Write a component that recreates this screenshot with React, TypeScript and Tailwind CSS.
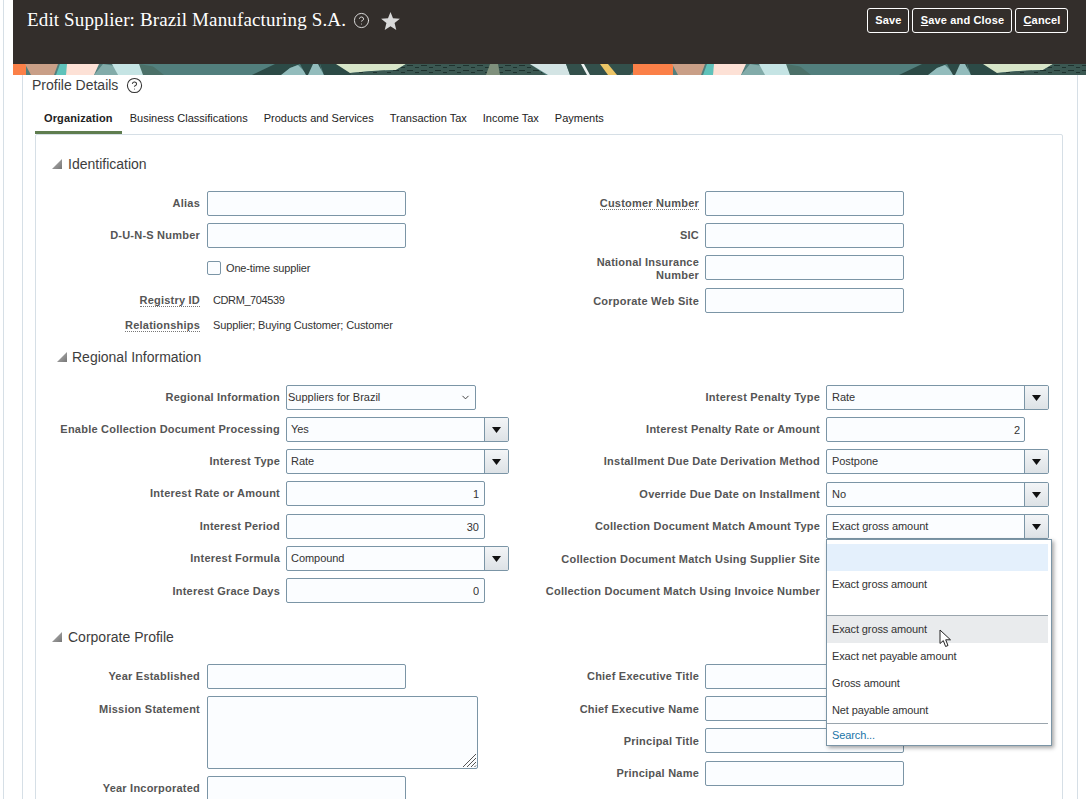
import React from "react";
import { ChevronDown, CircleHelp } from "lucide-react";

const FONT = "[font-family:'Liberation_Sans',Arial,sans-serif]";

function Tri() {
  return (
    <svg width="10" height="10" viewBox="0 0 10 10" className="shrink-0">
      <defs>
        <linearGradient id="tg" x1="0" y1="0" x2="1" y2="1">
          <stop offset="0" stopColor="#b5b5b5" />
          <stop offset="1" stopColor="#777777" />
        </linearGradient>
      </defs>
      <polygon points="10,0 10,10 0,10" fill="url(#tg)" />
    </svg>
  );
}

function Heading({ text, className }: { text: string; className: string }) {
  return (
    <div className={`flex h-[20px] items-center text-[14px] text-[#3d3d3d] ${className}`}>
      <Tri />
      <span>{text}</span>
    </div>
  );
}

function Label({ text, w, dotted, low }: { text: React.ReactNode; w: string; dotted?: boolean; low?: boolean }) {
  return (
    <div className={`${w} ${low ? "pt-[2px]" : ""} shrink-0 text-right text-[11px] font-bold leading-[13px] tracking-[0.22px] text-[#555555]`}>
      <span className={dotted ? "border-b border-dotted border-[#777777]" : ""}>{text}</span>
    </div>
  );
}

const boxCls =
  "h-[25px] rounded-[2px] border border-[#7b95a6] bg-[#fbfdff] text-[11px] text-[#333333] outline-none";

function Row({
  label,
  w,
  dotted,
  low,
  gap = "gap-[6px]",
  className = "",
  children,
}: {
  label: React.ReactNode;
  w: string;
  dotted?: boolean;
  low?: boolean;
  gap?: string;
  className?: string;
  children?: React.ReactNode;
}) {
  return (
    <div className={`flex h-[25px] items-center ${gap} ${className}`}>
      <Label text={label} w={w} dotted={dotted} low={low} />
      {children}
    </div>
  );
}

function TextBox({ value = "", pad = "pr-[4px]" }: { value?: string; pad?: string }) {
  return (
    <input
      readOnly
      value={value}
      className={`${boxCls} w-[199px] pl-[4px] pt-[1px] ${pad} text-right`}
    />
  );
}

function Combo({ value, pad = "pl-[4px]" }: { value: string; pad?: string }) {
  return (
    <div className={`${boxCls} flex w-[223px] items-stretch overflow-hidden`}>
      <div className={`flex flex-1 items-center ${pad} tracking-[-0.05px]`}>{value}</div>
      <div className="flex w-[24px] items-center justify-center border-l border-[#7b95a6] bg-gradient-to-b from-[#f3f5f7] to-[#dde2e6]">
        <svg width="9" height="6" viewBox="0 0 9 6">
          <polygon points="0,0 9,0 4.5,6" fill="#111111" />
        </svg>
      </div>
    </div>
  );
}

const tileShapes = (
  <>
    <polygon points="-14,0 26,0 26,11 -14,11" fill="#fb8048" />
    <polygon points="25,0 58,0 54,11 31,11" fill="#c99f87" />
    <polygon points="60,0 68,0 66,11 56,11" fill="#5fc2ba" />
    <polygon points="67,0 99,0 94,11 66,11" fill="#fde1d6" />
    <polygon points="103,0 116,2 118,11 94,11" fill="#82aba9" />
    <polygon points="112,0 140,0 144,11 118,11" fill="#c5e4e4" />
    <polygon points="139,0 156,3 166,11 143,11" fill="#4b7068" />
    <polygon points="150,0 275,0 252,11 164,11" fill="#527f7d" />
    <polygon points="275,0 300,0 290,4 282,11 252,11" fill="#2c4a46" />
    <polygon points="290,4 298,1 308,11 281,11" fill="#93bcbc" />
    <polygon points="300,0 320,0 322,11 306,11" fill="#2c4a46" />
    <polygon points="308,11 313,0 318,0 324,11" fill="#93bcbc" />
    <polygon points="320,0 345,0 352,11 324,11" fill="#2c4a46" />
    <polygon points="336,0 406,0 396,6 372,7 350,9" fill="#d7e5c8" />
    <polygon points="350,9 372,7 396,6 406,0 530,0 546,11 352,11" fill="url(#dots)" />
    <polygon points="490,0 498,0 500,11 486,11" fill="#7f907c" />
    <polygon points="530,0 566,0 570,11 548,11" fill="#d3e4e4" />
    <polygon points="566,0 640,0 630,11 570,11" fill="#33504b" />
    <polygon points="581,0 584,0 590,11 587,11" fill="#eef3f2" />
    <polygon points="600,0 608,0 617,11 608,11" fill="#edc566" />
  </>
);

function Banner() {
  return (
    <svg width="1073" height="11" viewBox="13 0 1073 11" className="block">
      <defs>
        <pattern id="dots" width="14" height="5" patternUnits="userSpaceOnUse">
          <rect width="14" height="5" fill="#3b5852" />
          <rect x="1" y="1" width="6" height="1" fill="#1f332f" />
          <rect x="9" y="3" width="4" height="1" fill="#1f332f" />
        </pattern>
      </defs>
      <rect x="13" width="1073" height="11" fill="#527f7d" />
      {tileShapes}
      <g transform="translate(647 0)">{tileShapes}</g>
    </svg>
  );
}

function HeaderButton({ children, w }: { children: React.ReactNode; w: string }) {
  return (
    <div
      className={`flex h-[25px] ${w} items-center justify-center rounded-[3px] border border-white pl-[1px] text-[11px] font-bold tracking-[0.15px] text-white`}
    >
      {children}
    </div>
  );
}

const tabs = ["Business Classifications", "Products and Services", "Transaction Tax", "Income Tax", "Payments"];

const ddItem = "flex h-[27px] items-center pl-[5px] mr-[3px]";

export default function App() {
  return (
    <div className={`relative h-[799px] w-full overflow-hidden bg-white ${FONT}`}>
      <div className="ml-[3px] h-full border-l border-[#d6dfe6] pl-[9px] pr-[3px]">
        {/* Page header */}
        <div className="flex h-[64px] items-start justify-between bg-[#332e2b] pl-[14px] pr-[18px] pt-[8px]">
          <div className="flex h-[25px] items-center text-white">
            <span className="text-[19px] tracking-[0.14px] [font-family:'Liberation_Serif',serif]">
              Edit Supplier: Brazil Manufacturing S.A.
            </span>
            <CircleHelp size={17} strokeWidth={1.3} className="ml-[7px] text-[#e6e6e6]" />
            <svg width="19" height="18" viewBox="0 0 24 23" className="ml-[11px]">
              <polygon
                points="12,0 15.2,8 24,8.7 17.2,14.2 19.4,23 12,18.2 4.6,23 6.8,14.2 0,8.7 8.8,8"
                fill="#d9d9d9"
              />
            </svg>
          </div>
          <div className="flex gap-[3px]">
            <HeaderButton w="w-[42px]">Save</HeaderButton>
            <HeaderButton w="w-[100px]">
              <span className="underline">S</span>ave and Close
            </HeaderButton>
            <HeaderButton w="w-[53px]">
              <span className="underline">C</span>ancel
            </HeaderButton>
          </div>
        </div>
        <Banner />

        {/* Main panel */}
        <div className="ml-[9px] mr-[8px] h-full border-x border-[#d6dfe6] pl-[9px] pr-[14px]">
          <div className="flex h-[20px] items-center gap-[8px] text-[14px] text-[#3d3d3d]">
            <span>Profile Details</span>
            <CircleHelp size={17} strokeWidth={1.5} className="text-[#333333]" />
          </div>

          <div className="ml-[3px] mt-[9px] flex h-[30px] text-[11px] text-[#222222]">
            <div className="flex items-center border-b-[3px] border-[#5f7d4f] px-[9px] pt-[1px] font-bold tracking-[0.12px]">Organization</div>
            {tabs.map((t) => (
              <div key={t} className="flex items-center px-[8px] pb-[2px]">
                {t}
              </div>
            ))}
          </div>

          <div className="ml-[3px] h-[700px] rounded-t-[2px] border border-[#d6dfe6] text-[11px] text-[#333333]">
            {/* Identification */}
            <Heading text="Identification" className="ml-[16px] mt-[19px] gap-[6px]" />
            <div className="mt-[17px] flex">
              <div className="flex w-[504px] flex-col">
                <Row label="Alias" w="w-[164px]" gap="gap-[7px]"><TextBox /></Row>
                <Row label="D-U-N-S Number" w="w-[164px]" gap="gap-[7px]" className="mt-[7px]"><TextBox /></Row>
                <div className="mt-[7px] flex h-[25px] items-center pl-[171px]">
                  <div className="h-[14px] w-[14px] rounded-[2px] border border-[#7b95a6] bg-[#fbfdff]" />
                  <span className="ml-[5px] pt-[2px] tracking-[-0.15px]">One-time supplier</span>
                </div>
                <Row label="Registry ID" w="w-[164px]" gap="gap-[13px]" dotted className="mt-[8px]">
                  <span className="tracking-[-0.4px]">CDRM_704539</span>
                </Row>
                <Row label="Relationships" w="w-[164px]" gap="gap-[13px]" dotted>
                  <span className="tracking-[-0.14px]">Supplier; Buying Customer; Customer</span>
                </Row>
              </div>
              <div className="flex flex-col">
                <Row label="Customer Number" w="w-[159px]" dotted><TextBox /></Row>
                <Row label="SIC" w="w-[159px]" className="mt-[7px]"><TextBox /></Row>
                <Row label={<>National Insurance<br />Number</>} w="w-[159px]" low className="mt-[7px]"><TextBox /></Row>
                <Row label="Corporate Web Site" w="w-[159px]" low className="mt-[8px]"><TextBox /></Row>
              </div>
            </div>

            {/* Regional Information */}
            <Heading text="Regional Information" className="ml-[21px] mt-[9px] gap-[5px]" />
            <div className="mt-[18px] flex">
              <div className="flex w-[504px] flex-col">
                <Row label="Regional Information" w="w-[244px]">
                  <div className={`${boxCls} flex w-[190px] items-center justify-between pl-[1px] pr-[4px]`}>
                    <span>Suppliers for Brazil</span>
                    <ChevronDown size={11} strokeWidth={2} />
                  </div>
                </Row>
                <Row label="Enable Collection Document Processing" w="w-[244px]" className="mt-[7px]"><Combo value="Yes" /></Row>
                <Row label="Interest Type" w="w-[244px]" className="mt-[7px]"><Combo value="Rate" /></Row>
                <Row label="Interest Rate or Amount" w="w-[244px]" className="mt-[7px]"><TextBox value="1" pad="pr-[5px]" /></Row>
                <Row label="Interest Period" w="w-[244px]" className="mt-[8px]"><TextBox value="30" pad="pr-[5px]" /></Row>
                <Row label="Interest Formula" w="w-[244px]" className="mt-[7px]"><Combo value="Compound" /></Row>
                <Row label="Interest Grace Days" w="w-[244px]" low className="mt-[7px]"><TextBox value="0" pad="pr-[5px]" /></Row>
              </div>
              <div className="flex flex-col">
                <Row label="Interest Penalty Type" w="w-[280px]"><Combo value="Rate" pad="pl-[5px]" /></Row>
                <Row label="Interest Penalty Rate or Amount" w="w-[280px]" className="mt-[7px]"><TextBox value="2" /></Row>
                <Row label="Installment Due Date Derivation Method" w="w-[280px]" className="mt-[7px]"><Combo value="Postpone" pad="pl-[5px]" /></Row>
                <Row label="Override Due Date on Installment" w="w-[280px]" className="mt-[8px]"><Combo value="No" pad="pl-[5px]" /></Row>
                <Row label="Collection Document Match Amount Type" w="w-[280px]" className="mt-[7px]"><Combo value="Exact gross amount" pad="pl-[5px]" /></Row>
                <Row label="Collection Document Match Using Supplier Site" w="w-[280px]" low className="mt-[7px]" />
                <Row label="Collection Document Match Using Invoice Number" w="w-[280px]" low className="mt-[7px]" />
              </div>
            </div>

            {/* Corporate Profile */}
            <Heading text="Corporate Profile" className="ml-[16px] mt-[24px] gap-[6px]" />
            <div className="mt-[17px] flex">
              <div className="flex w-[504px] flex-col">
                <Row label="Year Established" w="w-[164px]" gap="gap-[7px]"><TextBox /></Row>
                <div className="mt-[7px] flex items-start gap-[7px]">
                  <div className="flex h-[25px] items-center">
                    <Label text="Mission Statement" w="w-[164px]" low />
                  </div>
                  <div className="relative h-[73px] w-[271px] rounded-[2px] border border-[#7b95a6] bg-[#fbfdff]">
                    <svg width="15" height="15" viewBox="0 0 15 15" className="absolute bottom-0 right-0">
                      <path d="M1 14 L14 1 M5 14 L14 5 M9 14 L14 9 M12.5 14 L14 12.5" stroke="#555555" strokeWidth="1" fill="none" />
                    </svg>
                  </div>
                </div>
                <Row label="Year Incorporated" w="w-[164px]" gap="gap-[7px]" className="mt-[7px]"><TextBox /></Row>
              </div>
              <div className="flex flex-col">
                <Row label="Chief Executive Title" w="w-[159px]"><TextBox /></Row>
                <Row label="Chief Executive Name" w="w-[159px]" low className="mt-[7px]"><TextBox /></Row>
                <Row label="Principal Title" w="w-[159px]" low className="mt-[7px]"><TextBox /></Row>
                <Row label="Principal Name" w="w-[159px]" className="mt-[8px]"><TextBox /></Row>
              </div>
            </div>
          </div>
        </div>
      </div>

      {/* Dropdown popup */}
      <div className="absolute left-[826px] top-[539px] h-[207px] w-[226px] border border-[#7b95a6] bg-white pt-[4px] text-[11px] tracking-[-0.12px] text-[#333333] shadow-[2px_2px_4px_rgba(0,0,0,0.35)]">
        <div className={`${ddItem} bg-[#e4f0fc]`} />
        <div className={ddItem}>Exact gross amount</div>
        <div className="mr-[3px] mt-[17px] border-t border-[#9aa5ad]" />
        <div className={`${ddItem} bg-[#e9ebed]`}>Exact gross amount</div>
        <div className={ddItem}>Exact net payable amount</div>
        <div className={ddItem}>Gross amount</div>
        <div className="mr-[3px] flex h-[26px] items-center pl-[5px]">Net payable amount</div>
        <div className="mr-[3px] border-t border-[#9aa5ad]" />
        <div className="flex h-[22px] items-center pl-[5px] text-[#1a75a8]">Search...</div>
      </div>

      {/* Mouse cursor */}
      <svg width="13" height="19" viewBox="0 0 13 19" className="absolute left-[939px] top-[629px]">
        <path d="M1 1 L1 14.5 L4.3 11.6 L6.6 17.5 L9 16.5 L6.7 10.8 L11.5 10.8 Z" fill="#ffffff" stroke="#222222" strokeWidth="1" strokeLinejoin="round" />
      </svg>
    </div>
  );
}
